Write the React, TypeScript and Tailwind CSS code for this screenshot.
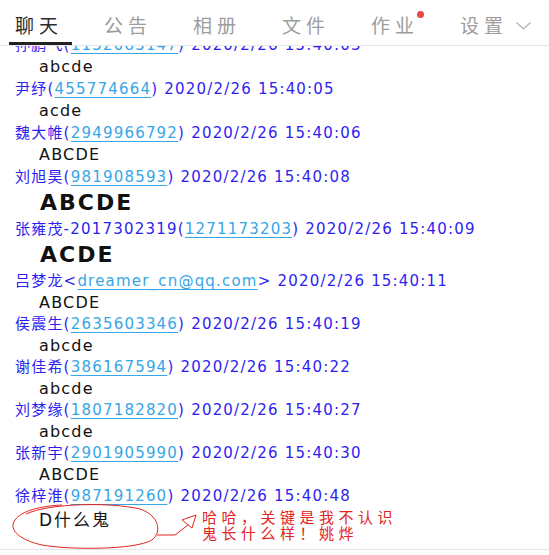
import React from "react";

type Row =
  | { k: "h"; name: string; id: string; time: string; email?: boolean; h?: string }
  | { k: "c"; text: string; h: string }
  | { k: "L"; text: string };

const rows: Row[] = [
  { k: "h", name: "孙鹏飞", id: "1152085147", time: "15:40:03" },
  { k: "c", text: "abcde", h: "h-[22px] leading-[22px]" },
  { k: "h", name: "尹纾", id: "455774664", time: "15:40:05" },
  { k: "c", text: "acde", h: "h-[22px] leading-[22px]" },
  { k: "h", name: "魏大帷", id: "2949966792", time: "15:40:06" },
  { k: "c", text: "ABCDE", h: "h-[22px] leading-[22px]" },
  { k: "h", name: "刘旭昊", id: "981908593", time: "15:40:08" },
  { k: "L", text: "ABCDE" },
  { k: "h", name: "张雍茂-2017302319", id: "1271173203", time: "15:40:09" },
  { k: "L", text: "ACDE" },
  { k: "h", name: "吕梦龙", id: "dreamer_cn@qq.com", time: "15:40:11", email: true },
  { k: "c", text: "ABCDE", h: "h-[21px] leading-[21px]" },
  { k: "h", name: "侯震生", id: "2635603346", time: "15:40:19" },
  { k: "c", text: "abcde", h: "h-[21px] leading-[21px]" },
  { k: "h", name: "谢佳希", id: "386167594", time: "15:40:22" },
  { k: "c", text: "abcde", h: "h-[21px] leading-[21px]" },
  { k: "h", name: "刘梦缘", id: "1807182820", time: "15:40:27" },
  { k: "c", text: "abcde", h: "h-[21px] leading-[21px]" },
  { k: "h", name: "张新宇", id: "2901905990", time: "15:40:30" },
  { k: "c", text: "ABCDE", h: "h-[21px] leading-[21px]" },
  { k: "h", name: "徐梓淮", id: "987191260", time: "15:40:48" },
];

const FONT = "font-['DejaVu_Sans','Noto_Sans_CJK_SC',sans-serif]";

function Tab({ label, active, dot }: { label: string; active?: boolean; dot?: boolean }) {
  return (
    <div className="w-[89px] shrink-0 px-[6px]">
      <span
        className={`relative inline-block text-[19px] leading-[24px] tracking-[5px] mr-[-5px] ${
          active ? "text-[#2b2b2b]" : "text-[#9d9d9d]"
        }`}
      >
        {label}
        {dot && (
          <span className="absolute left-[46px] top-[-2px] w-[7px] h-[7px] rounded-full bg-[#e8473f]" />
        )}
      </span>
    </div>
  );
}

export default function App() {
  return (
    <div className={`w-[549px] h-[555px] bg-white overflow-hidden ${FONT}`}>
      {/* header */}
      <div className="relative h-[46px] border-b border-[#e6e6e6] flex items-start pt-[13px] pl-[9px] font-['Noto_Sans_CJK_SC','DejaVu_Sans',sans-serif]">
        <Tab label="聊天" active />
        <Tab label="公告" />
        <Tab label="相册" />
        <Tab label="文件" />
        <Tab label="作业" dot />
        <div className="flex items-center px-[6px]">
          <span className="text-[19px] leading-[24px] tracking-[5px] mr-[-5px] text-[#9d9d9d]">设置</span>
          <svg width="15" height="8" viewBox="0 0 15 8" className="ml-[13px] mt-[2px]">
            <polyline points="0.5,0.5 7.5,7 14.5,0.5" fill="none" stroke="#b0b0b0" strokeWidth="1.2" />
          </svg>
        </div>
        <div className="absolute left-[9px] bottom-0 w-[63px] h-[3px] bg-[#222]" />
      </div>

      {/* messages */}
      <div className="h-[504px] border-b border-[#e6e6e6] overflow-hidden">
        <div className="mt-[-12px] flex flex-col">
          {rows.map((r, i) => {
            if (r.k === "h") {
              return (
                <div
                  key={i}
                  className="h-[22px] leading-[22px] pl-[15px] text-[15px] tracking-[1.2px] text-[#2d1ef0] whitespace-nowrap"
                >
                  {r.name}
                  {r.email ? "<" : "("}
                  <span className="text-[#36a6e8] underline underline-offset-[3px] decoration-[#36a6e8]">{r.id}</span>
                  {r.email ? ">" : ")"} 2020/2/26 {r.time}
                </div>
              );
            }
            if (r.k === "c") {
              return (
                <div key={i} className={`${r.h} pl-[39px] text-[16px] tracking-[1.2px] text-[#111]`}>
                  {r.text}
                </div>
              );
            }
            return (
              <div key={i} className="h-[30px] leading-[30px] pl-[40px] text-[22px] font-bold tracking-[2px] text-[#111]">
                {r.text}
              </div>
            );
          })}

          {/* last row with annotation */}
          <div className="relative flex items-start h-[50px]">
            <svg
              className="absolute left-0 top-[-7px]"
              width="210"
              height="55"
              viewBox="0 500 210 55"
              fill="none"
            >
              <path
                d="M 26 514 C 50 503, 110 502, 140 509 C 158 515, 163 531, 152 540 C 135 550, 70 550, 42 545 C 20 540, 8 530, 15 520 C 21 511, 40 506, 62 505"
                stroke="#e3241f"
                strokeWidth="1"
              />
              <path d="M 157 535 L 175 535 L 188 525" stroke="#e3241f" strokeWidth="1" />
              <path d="M 182 520 L 196 515 L 192 528 Z" stroke="#e3241f" strokeWidth="1" />
            </svg>
            <div className="w-[202px] shrink-0 pl-[39px] pt-[2px] leading-[22px] text-[17px] tracking-[2px] text-[#151515]">
              D什么鬼
            </div>
            <div className="pt-[2px] text-[15px] leading-[16px] tracking-[4.5px] text-[#e3241f] font-['Noto_Sans_CJK_SC',sans-serif]">
              <div>哈哈，关键是我不认识</div>
              <div>鬼长什么样！姚烨</div>
            </div>
          </div>
        </div>
      </div>
    </div>
  );
}
